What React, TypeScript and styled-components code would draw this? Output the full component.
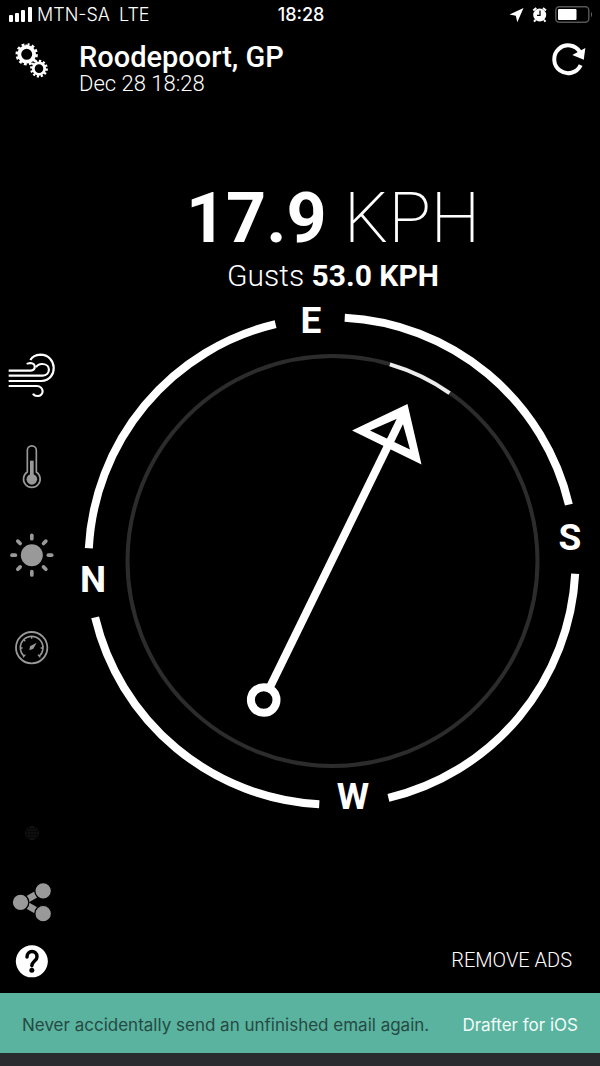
import React from "react";
import styled, { createGlobalStyle } from "styled-components";

const GlobalStyle = createGlobalStyle`
  * { box-sizing: border-box; }
  body { margin: 0; background: #000; color: #fff; font-family: Roboto, "Open Sans", sans-serif; }
  button { appearance: none; border: 0; padding: 0; background: none; color: inherit; font: inherit; cursor: pointer; }
  svg { display: block; overflow: visible; }
`;

const Screen = styled.div`
  min-height: 100vh;
  display: flex;
  flex-direction: column;
`;

const StatusBar = styled.div`
  display: grid;
  grid-template-columns: 1fr auto 1fr;
  align-items: center;
  height: 30px;
  padding: 0 6px 0 8px;
  font-family: Inter, sans-serif;
  font-size: 18px;
  line-height: 30px;
`;

const Carrier = styled.div`
  display: flex;
  align-items: center;
  gap: 4px;
  font-weight: 300;
`;

const Network = styled.span`
  margin-left: 5px;
`;

const Clock = styled.time`
  font-weight: 500;
`;

const StatusIcons = styled.div`
  display: flex;
  justify-content: flex-end;
`;

const Header = styled.header`
  display: grid;
  grid-template-columns: 79px 1fr 64px;
  height: 66px;
  padding-top: 10px;
`;

const HeaderButton = styled.button`
  width: 64px;
  height: 40px;
  display: grid;
  place-items: center;
`;

const Place = styled.h1`
  margin: 0;
  font-size: 29px;
  line-height: 34px;
  font-weight: 500;
`;

const Stamp = styled.p`
  margin: 0;
  font-size: 22px;
  line-height: 20px;
  font-weight: 300;
`;

const Dashboard = styled.main`
  flex: 1;
  display: grid;
  grid-template-columns: 66px 1fr;
  grid-template-rows: 204px auto 1fr;
`;

const Readout = styled.section`
  grid-column: 2;
  padding-top: 82px;
  text-align: center;
`;

const Speed = styled.p<{ $size: number; $height: number }>`
  margin: 0;
  font-size: ${(p) => p.$size}px;
  line-height: ${(p) => p.$height}px;
  white-space: nowrap;
`;

const Bold = styled.strong`
  font-weight: 700;
`;

const Thin = styled.span<{ $weight: number }>`
  font-weight: ${(p) => p.$weight};
`;

const Rail = styled.nav`
  display: flex;
  flex-direction: column;
  align-items: center;
  gap: 45px;
  padding: 52px 2px 0 0;
`;

const BottomRail = styled.nav`
  display: flex;
  flex-direction: column;
  align-items: center;
  gap: 13px;
  padding: 1px 2px 9px 0;
`;

const RailButton = styled.button<{ $active?: boolean }>`
  width: 48px;
  height: 46px;
  color: ${(p) => (p.$active ? "#fff" : "#999")};
`;

const GlobeButton = styled.button`
  margin-bottom: auto;
  color: #141414;
`;

const Dial = styled.svg`
  width: 100%;
  height: auto;
`;

const DialLetter = styled.text`
  font-size: 37px;
  font-weight: 700;
  fill: #fff;
  text-anchor: middle;
`;

const Actions = styled.div`
  display: flex;
  justify-content: flex-end;
  align-items: flex-end;
  padding: 0 28px 19px 0;
`;

const RemoveAds = styled.button`
  font-size: 20px;
  line-height: 28px;
  font-weight: 300;
`;

const Ad = styled.a`
  display: flex;
  justify-content: space-between;
  align-items: center;
  height: 60px;
  padding: 4px 22px 0;
  background: #59b39e;
  color: #264a43;
  font-family: Inter, sans-serif;
  font-size: 17px;
  text-decoration: none;
  white-space: nowrap;
`;

const AdProduct = styled.span`
  color: #f3fbf9;
`;

const Strip = styled.div`
  height: 13px;
  background: #2a2b2f;
`;

const Gear = ({ cx, cy, r, w, tooth }: { cx: number; cy: number; r: number; w: number; tooth: number }) => (
  <g fill="none" stroke="#fff">
    <circle cx={cx} cy={cy} r={r} strokeWidth={w} />
    <circle
      cx={cx}
      cy={cy}
      r={r + w / 2 + 0.6}
      strokeWidth={tooth}
      pathLength={24}
      strokeDasharray="1.1 0.9"
    />
  </g>
);

const ARC_STARTS = [0, 90, 180, 270];
const RADIUS = 243.5;

const point = (deg: number, r: number) => {
  const a = (deg * Math.PI) / 180;
  return `${266 + r * Math.sin(a)} ${261 - r * Math.cos(a)}`;
};

const arc = (from: number, to: number, r: number) =>
  `M${point(from, r)}A${r} ${r} 0 0 1 ${point(to, r)}`;

const Compass = () => (
  <Dial viewBox="0 0 534 520" role="img" aria-label="Wind direction">
    <circle cx="266.500" cy="261" r="205" fill="none" stroke="#2c2c2c" strokeWidth="4" />
    <path d={arc(16.4, 35, 205)} fill="none" stroke="#ececec" strokeWidth="4" />
    {ARC_STARTS.map((s) => (
      <path key={s} d={arc(s + 3, s + 76.6, RADIUS)} fill="none" stroke="#fff" strokeWidth="8" />
    ))}
    <path d="M204 387L338 113" stroke="#fff" strokeWidth="8" />
    <path
      fillRule="evenodd"
      fill="#fff"
      d="M341.5 104L286 130.500L355.500 164.500ZM335 117L344 149.500L304 130.500Z"
    />
    <circle cx="197.700" cy="400" r="12.800" fill="none" stroke="#fff" strokeWidth="8" />
    <DialLetter x="245" y="33">E</DialLetter>
    <DialLetter x="504" y="250">S</DialLetter>
    <DialLetter x="287" y="509">W</DialLetter>
    <DialLetter x="27" y="292">N</DialLetter>
  </Dial>
);

export default function App() {
  return (
    <Screen>
      <GlobalStyle />
      <StatusBar>
        <Carrier>
          <svg width="25" height="16" viewBox="0 0 25 16" fill="#fff" aria-hidden="true">
            <rect x="1" y="8" width="4" height="7" rx="1" />
            <rect x="7" y="6" width="4" height="9" rx="1" />
            <rect x="13" y="3" width="4" height="12" rx="1" />
            <rect x="20" y="0" width="4" height="15" rx="1" />
          </svg>
          <span>MTN-SA</span>
          <Network>LTE</Network>
        </Carrier>
        <Clock>18:28</Clock>
        <StatusIcons>
          <svg width="86" height="20" viewBox="508 5 86 20" aria-hidden="true">
            <path d="M523.5 8L509.500 14.500L515.800 15.700L517.300 22.300Z" fill="#fff" />
            <circle cx="539.700" cy="15" r="6.500" fill="#fff" />
            <path d="M533.300 10.500l3-2.500M546 10.500l-3-2.500M535.500 20l-1.500 1.700M544 20l1.500 1.700" stroke="#fff" strokeWidth="2" />
            <path d="M540 10.500V15.300H537" fill="none" stroke="#000" strokeWidth="1.300" />
            <rect x="555.800" y="6.700" width="33" height="15.600" rx="3.500" fill="none" stroke="#555" strokeWidth="1.500" />
            <rect x="558" y="9" width="18.500" height="11" rx="1" fill="#fff" />
            <path d="M591 11.500q2 3 0 6z" fill="#666" />
          </svg>
        </StatusIcons>
      </StatusBar>

      <Header>
        <HeaderButton aria-label="Settings">
          <svg width="34" height="36" viewBox="15 42 34 36">
            <Gear cx={26.7} cy={54.3} r={7.4} w={3.8} tooth={2.6} />
            <Gear cx={39} cy={68.600} r={5.700} w={2.800} tooth={2.400} />
          </svg>
        </HeaderButton>
        <div>
          <Place>Roodepoort, GP</Place>
          <Stamp>Dec 28 18:28</Stamp>
        </div>
        <HeaderButton aria-label="Refresh">
          <svg width="36" height="36" viewBox="550 42 36 36">
            <path d="M580.700 65.200A13.900 13.900 0 1 1 580 52" fill="none" stroke="#fff" strokeWidth="4" />
            <path d="M585.300 48L583.800 59.800L572.300 55Z" fill="#fff" />
          </svg>
        </HeaderButton>
      </Header>

      <Dashboard>
        <Readout>
          <Speed $size={70} $height={80}>
            <Bold>17.9</Bold> <Thin $weight={200}>KPH</Thin>
          </Speed>
          <Speed $size={30} $height={36}>
            <Thin $weight={300}>Gusts</Thin> <Bold>53.0 KPH</Bold>
          </Speed>
        </Readout>

        <Rail aria-label="Measurements">
          <RailButton $active aria-label="Wind">
            <svg width="48" height="46" viewBox="24 36 144 138" fill="none" stroke="currentColor" strokeWidth="6.500">
              <path d="M26 92H92C108 91 109 70 91 69Q83 69 81 73" />
              <path d="M26 107H128C152 106 154 73 128 72Q114 71 108 82" />
              <path d="M26 123H124C176 120 172 44 121 44Q100 45 91 60" />
              <path d="M26 138H110C133 139 134 168 112 168Q102 168 99 161" />
            </svg>
          </RailButton>
          <RailButton aria-label="Temperature">
            <svg width="48" height="46" viewBox="24 309 144 138" fill="none" stroke="currentColor" strokeWidth="5">
              <path d="M82 396V331a13.500 13.500 0 0 1 27 0V396A25 25 0 1 1 82 396Z" />
              <circle cx="95.500" cy="418" r="16" fill="currentColor" stroke="none" />
              <path d="M95.500 362V415" strokeWidth="11" />
            </svg>
          </RailButton>
          <RailButton aria-label="Solar">
            <svg width="48" height="46" viewBox="24 42 144 138" stroke="currentColor" strokeWidth="11" strokeLinecap="round">
              <circle cx="95.500" cy="105.500" r="33" fill="currentColor" stroke="none" />
              {[0, 45, 90, 135, 180, 225, 270, 315].map((a) => (
                <path key={a} d="M95.500 56V46" transform={`rotate(${a} 95.500 105.500)`} />
              ))}
            </svg>
          </RailButton>
          <RailButton aria-label="Pressure">
            <svg width="48" height="46" viewBox="24 315 144 138" fill="none" stroke="currentColor" strokeWidth="5.500">
              <circle cx="95" cy="383" r="47" />
              <path d="M72 408A34 34 0 1 1 118 408" strokeWidth="5" />
              <path d="M95 349v7M61 384h7M122 384h7M71 359l5 5M69 412l7-8M121 412l-7-8" strokeWidth="4" />
              <path d="M110 368L100 386L88 391L90 379Z" fill="currentColor" stroke="none" />
            </svg>
          </RailButton>
        </Rail>
        <Compass />

        <BottomRail aria-label="More">
          <GlobeButton aria-label="Website">
            <svg width="24" height="24" viewBox="0 0 24 24" fill="none" stroke="currentColor">
              <circle cx="12" cy="12" r="6.500" />
              <ellipse cx="12" cy="12" rx="3" ry="6.500" />
              <path d="M12 5.500v13M5.500 12h13M6.500 9h11M6.500 15h11" />
            </svg>
          </GlobeButton>
          <RailButton aria-label="Share">
            <svg width="48" height="46" viewBox="24 207 144 138" fill="currentColor">
              <path d="M82 268L108 253M82 286L108 301" stroke="currentColor" strokeWidth="20" />
              <g stroke="#000" strokeWidth="4">
                <circle cx="61.500" cy="277" r="25" />
                <circle cx="129.500" cy="242.500" r="25" />
                <circle cx="129.500" cy="311" r="25" />
              </g>
            </svg>
          </RailButton>
          <RailButton $active aria-label="Help">
            <svg width="48" height="46" viewBox="24 384 144 138">
              <circle cx="95.500" cy="454" r="48" fill="#fff" />
              <path d="M81 441C81 420 111 419 111 440C111 453 96 453 95.500 467" fill="none" stroke="#000" strokeWidth="10.500" strokeLinecap="round" />
              <circle cx="95.500" cy="481" r="7.500" fill="#000" />
            </svg>
          </RailButton>
        </BottomRail>
        <Actions>
          <RemoveAds>REMOVE ADS</RemoveAds>
        </Actions>
      </Dashboard>

      <Ad href="#drafter">
        <span>Never accidentally send an unfinished email again.</span>
        <AdProduct>Drafter for iOS</AdProduct>
      </Ad>
      <Strip />
    </Screen>
  );
}
